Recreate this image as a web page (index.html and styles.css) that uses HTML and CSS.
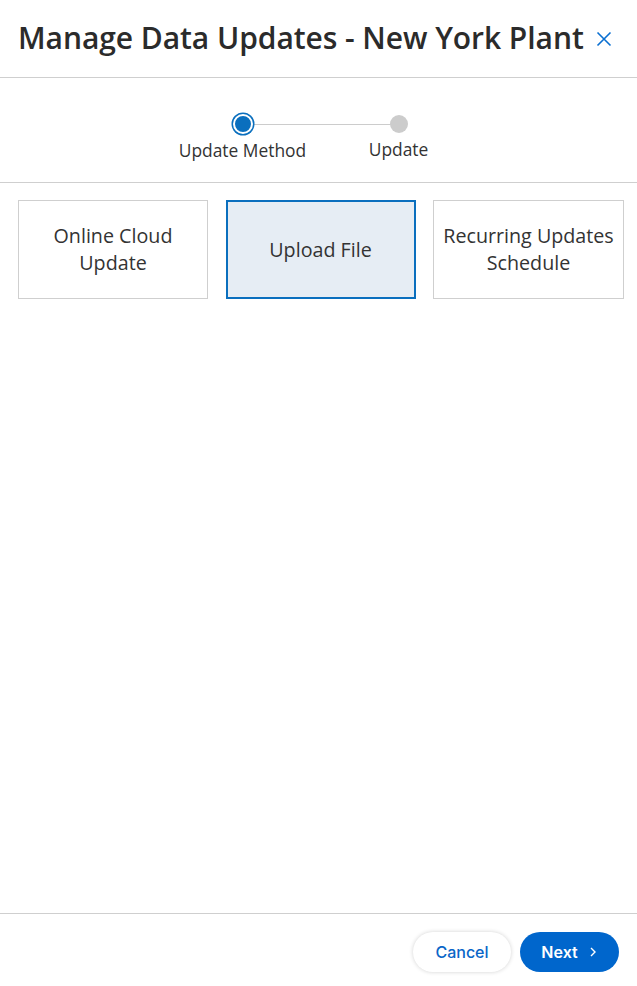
FILE: index.html
```html
<!DOCTYPE html>
<html>
<head>
<meta charset="utf-8">
<link rel="stylesheet" href="styles.css">
</head>
<body>
<div class="dialog">
  <header class="header">
    <h1 class="title">Manage Data Updates - New York Plant</h1>
    <button class="close" aria-label="Close">
      <svg width="16" height="16" viewBox="0 0 16 16"><path d="M1.5 1.5 L14.5 14.5 M14.5 1.5 L1.5 14.5" stroke="#0a6fd1" stroke-width="1.6" fill="none"/></svg>
    </button>
  </header>
  <div class="stepper">
    <div class="steps">
      <div class="step active">
        <span class="dot"></span>
        <span class="label">Update Method</span>
      </div>
      <div class="step">
        <span class="dot"></span>
        <span class="label">Update</span>
      </div>
    </div>
  </div>
  <main class="content">
    <div class="options">
      <div class="option">Online Cloud<br>Update</div>
      <div class="option selected">Upload File</div>
      <div class="option">Recurring Updates<br>Schedule</div>
    </div>
  </main>
  <footer class="footer">
    <button class="btn cancel">Cancel</button>
    <button class="btn next">Next <svg width="10" height="10" viewBox="0 0 10 10"><path d="M3 1 L7 5 L3 9" stroke="#fff" stroke-width="1.4" fill="none"/></svg></button>
  </footer>
</div>
</body>
</html>
```

FILE: styles.css
```css
* { box-sizing: border-box; }
html, body { margin: 0; padding: 0; background: #fff; }
body { font-family: "Open Sans", sans-serif; color: #333; }
.dialog { width: 637px; height: 986px; display: flex; flex-direction: column; }
.header {
  height: 78px;
  border-bottom: 1px solid #cfcfcf;
  display: flex;
  align-items: center;
  padding: 0 0 0 18px;
}
.title { margin: 0; font-size: 30px; font-weight: 600; color: #2b2b2b; letter-spacing: -0.06px; padding-bottom: 2px; }
.close { border: 0; background: none; padding: 0; margin-left: 12px; display: flex; margin-top: 0; }
.stepper {
  height: 105px;
  border-bottom: 1px solid #cfcfcf;
  display: flex;
  justify-content: center;
  padding-top: 36px;
}
.steps { display: flex; gap: 0; position: relative; margin-left: 4px; }
.step { display: flex; flex-direction: column; align-items: center; position: relative; width: 156px; }
.step .dot { width: 18px; height: 18px; border-radius: 50%; background: #cccccc; position: relative; z-index: 1; margin-top: 1px; }
.step.active .dot { width: 20px; height: 20px; margin-top: 0; background: #0a6fbe; border: 2px solid #fff; box-shadow: 0 0 0 1.5px #0a6fbe; }
.step.active::after {
  content: ""; position: absolute; top: 10px; left: 78px; width: 156px; height: 1px; background: #cccccc;
}
.label { font-size: 17.4px; margin-top: 4px; color: #333; }
.content { flex: 1; padding: 17px 13px 0 18px; }
.options { display: grid; grid-template-columns: 190px 190px 191px; column-gap: 17.5px; }
.option {
  height: 99px;
  border: 1px solid #cfcfcf;
  display: flex; align-items: center; justify-content: center; text-align: center;
  font-size: 19.7px; line-height: 27px; color: #333; padding-bottom: 1px;
}
.option.selected { border: 2px solid #0a6fbe; background: #e6edf4; }
.footer {
  height: 73px;
  border-top: 1px solid #cfcfcf;
  display: flex; justify-content: flex-end; align-items: flex-start;
  padding: 18px 18px 0 0; gap: 9px;
}
.btn {
  font-family: Inter, sans-serif; font-size: 16px; font-weight: 600;
  height: 40px; border-radius: 20px; border: 0; cursor: pointer;
  display: flex; align-items: center; justify-content: center;
}
.cancel { width: 98px; background: #fff; color: #0a66c8; box-shadow: 0 0 4px rgba(0,0,0,0.18); font-weight: 500; }
.next { width: 99px; background: #0066cc; color: #fff; gap: 10px; padding-left: 6px; }
```
